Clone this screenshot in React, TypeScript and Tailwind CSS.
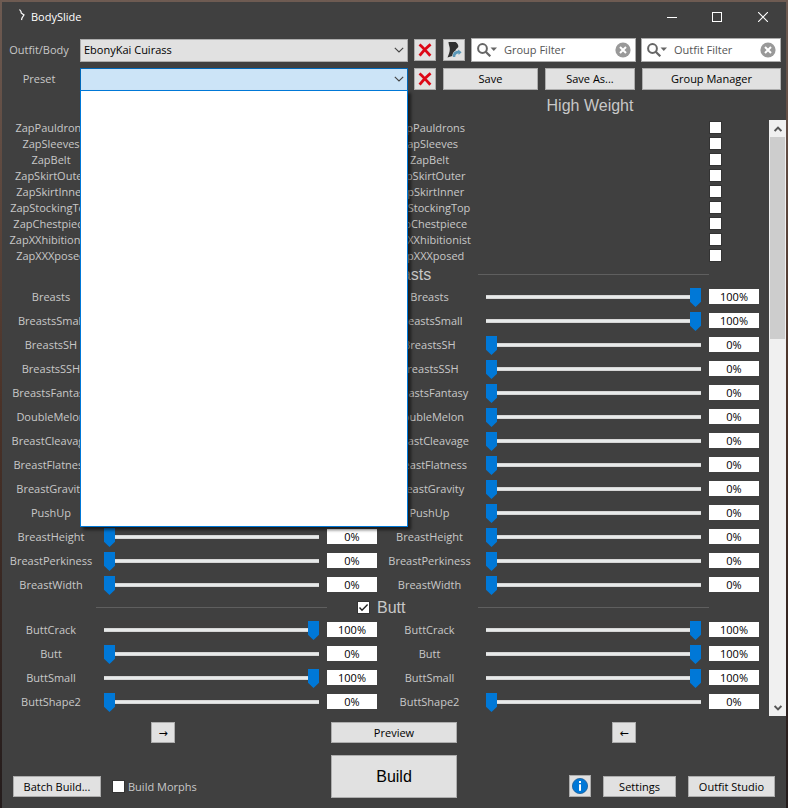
import React, { useState } from 'react';

type SliderItem = { name: string; low: number; high: number };

const zaps = [
  'ZapPauldrons',
  'ZapSleeves',
  'ZapBelt',
  'ZapSkirtOuter',
  'ZapSkirtInner',
  'ZapStockingTop',
  'ZapChestpiece',
  'ZapXXhibitionist',
  'ZapXXXposed',
];

const breasts: SliderItem[] = [
  { name: 'Breasts', low: 100, high: 100 },
  { name: 'BreastsSmall', low: 100, high: 100 },
  { name: 'BreastsSH', low: 0, high: 0 },
  { name: 'BreastsSSH', low: 0, high: 0 },
  { name: 'BreastsFantasy', low: 0, high: 0 },
  { name: 'DoubleMelon', low: 0, high: 0 },
  { name: 'BreastCleavage', low: 0, high: 0 },
  { name: 'BreastFlatness', low: 0, high: 0 },
  { name: 'BreastGravity', low: 0, high: 0 },
  { name: 'PushUp', low: 0, high: 0 },
  { name: 'BreastHeight', low: 0, high: 0 },
  { name: 'BreastPerkiness', low: 0, high: 0 },
  { name: 'BreastWidth', low: 0, high: 0 },
];

const butt: SliderItem[] = [
  { name: 'ButtCrack', low: 100, high: 100 },
  { name: 'Butt', low: 0, high: 100 },
  { name: 'ButtSmall', low: 100, high: 100 },
  { name: 'ButtShape2', low: 0, high: 0 },
];

const rowGrid = 'grid grid-cols-[90px_1fr_50px_101px_1fr_50px] items-center';
const buttonStyle = 'flex items-center justify-center border border-[#adadad] bg-[#e1e1e1] text-black';

const CheckBox: React.FC<{ id: string; checked?: boolean }> = ({ id, checked }) => (
  <span className="relative flex size-[13px] shrink-0">
    <input
      id={id}
      type="checkbox"
      defaultChecked={checked}
      className="peer size-[13px] appearance-none border border-[#333333] bg-white"
    />
    <svg
      viewBox="0 0 13 13"
      className="pointer-events-none absolute inset-0 hidden size-[13px] peer-checked:block"
      fill="none"
      stroke="#222"
      strokeWidth="1.4"
    >
      <path d="M2.5 6.5 L5 9.2 L10.6 3.4" />
    </svg>
  </span>
);

const Slider: React.FC<{ id: string; value: number; onChange: (value: number) => void }> = ({ id, value, onChange }) => (
  <div className="flex px-2">
    <input
      id={id}
      type="range"
      min={0}
      max={100}
      value={value}
      onChange={(e) => onChange(Number(e.target.value))}
      className="h-5 w-full min-w-0 appearance-none bg-transparent [&::-webkit-slider-runnable-track]:h-1 [&::-webkit-slider-runnable-track]:border-y [&::-webkit-slider-runnable-track]:border-[#d6d6d6] [&::-webkit-slider-runnable-track]:bg-[#e7eaea] [&::-webkit-slider-thumb]:mt-[-8px] [&::-webkit-slider-thumb]:h-[19px] [&::-webkit-slider-thumb]:w-[11px] [&::-webkit-slider-thumb]:appearance-none [&::-webkit-slider-thumb]:bg-[#0078d7] [&::-webkit-slider-thumb]:[clip-path:polygon(0_0,100%_0,100%_72%,50%_100%,0_72%)]"
    />
  </div>
);

const ValueBox: React.FC<{ label: string; value: number }> = ({ label, value }) => (
  <input
    type="text"
    aria-label={label}
    value={`${value}%`}
    readOnly
    className="mb-px h-[15px] w-full min-w-0 bg-white text-center text-black"
  />
);

const SliderRow: React.FC<{ item: SliderItem }> = ({ item }) => {
  const [low, setLow] = useState(item.low);
  const [high, setHigh] = useState(item.high);

  return (
    <div className={`${rowGrid} h-6`}>
      <label htmlFor={`${item.name}-low`} className="flex justify-center">
        {item.name}
      </label>
      <Slider id={`${item.name}-low`} value={low} onChange={setLow} />
      <ValueBox label={item.name} value={low} />
      <label htmlFor={`${item.name}-high`} className="flex justify-center pl-1">
        {item.name}
      </label>
      <Slider id={`${item.name}-high`} value={high} onChange={setHigh} />
      <ValueBox label={item.name} value={high} />
    </div>
  );
};

const ZapRow: React.FC<{ name: string }> = ({ name }) => (
  <div className={`${rowGrid} h-4`}>
    <label htmlFor={`${name}-low`} className="flex justify-center">
      {name}
    </label>
    <span />
    <CheckBox id={`${name}-low`} />
    <label htmlFor={`${name}-high`} className="flex justify-center pl-1">
      {name}
    </label>
    <span />
    <div className="flex h-4 items-start pt-px">
      <CheckBox id={`${name}-high`} />
    </div>
  </div>
);

const Category: React.FC<{ title: string; items: SliderItem[] }> = ({ title, items }) => (
  <section>
    <div className={`${rowGrid} h-[21px]`}>
      <span />
      <hr className="border-[#5f5f5f]" />
      <div className="col-span-2 flex items-center gap-[7px] pl-[30px]">
        <CheckBox id={`category-${title}`} checked />
        <label htmlFor={`category-${title}`} className="font-['Liberation_Sans',sans-serif] text-[16px]">
          {title}
        </label>
      </div>
      <hr className="border-[#5f5f5f]" />
      <span />
    </div>
    {items.map((item) => (
      <SliderRow key={item.name} item={item} />
    ))}
  </section>
);

const Chevron: React.FC<{ className?: string }> = ({ className }) => (
  <svg viewBox="0 0 10 6" className={className} fill="none" stroke="#444" strokeWidth="1.1">
    <path d="M0.8 0.8 L5 5 L9.2 0.8" />
  </svg>
);

const DeleteButton: React.FC<{ label: string }> = ({ label }) => (
  <button type="button" aria-label={label} className={`${buttonStyle} h-[22px] w-[22px] shrink-0`}>
    <svg viewBox="0 0 14 14" className="size-[14px]" fill="none" stroke="#dd0716" strokeWidth="2.8">
      <path d="M1.5 1.5 C5 4.5 9 9 12.3 12.7 M12.6 1.4 C8.5 4.5 5 8.5 1.6 12.6" />
    </svg>
  </button>
);

const FilterBox: React.FC<{ label: string; className: string }> = ({ label, className }) => (
  <div className={`flex h-6 items-center border border-[#adadad] bg-white pr-1 pl-[5px] ${className}`}>
    <svg viewBox="0 0 20 14" className="h-[14px] w-5 shrink-0" fill="none" stroke="#666" strokeWidth="2">
      <circle cx="5.5" cy="5.5" r="4.4" />
      <path d="M8.7 8.7 L13.3 13.3" strokeWidth="2.2" />
      <path d="M13.5 4.5 H20 L16.8 8 Z" fill="#666" stroke="none" />
    </svg>
    <input
      type="text"
      aria-label={label}
      placeholder={label}
      className="mb-px w-0 min-w-0 flex-1 px-[7px] text-[#555] placeholder:text-[#555]"
    />
    <button type="button" aria-label="Clear" className="shrink-0">
      <svg viewBox="0 0 16 16" className="size-4" fill="none">
        <circle cx="8" cy="8" r="7.6" fill="#999" />
        <path d="M5 5 L11 11 M11 5 L5 11" stroke="#fff" strokeWidth="2" />
      </svg>
    </button>
  </div>
);

const TitleBar: React.FC = () => (
  <header className="flex h-[30px] items-center text-white">
    <svg viewBox="0 0 16 16" className="ml-2 size-4" fill="none" stroke="#fff" strokeWidth="1.2">
      <path d="M9.5 0.5 L11 2.5 L11.2 4 L14 6 L12 9 L11.5 11" />
    </svg>
    <h1 className="ml-[5px] flex-1">BodySlide</h1>
    <button type="button" aria-label="Minimize" className="flex h-full w-[45px] items-center justify-center">
      <svg viewBox="0 0 10 10" className="size-[10px]" stroke="#fff">
        <path d="M0 5.5 H10" />
      </svg>
    </button>
    <button type="button" aria-label="Maximize" className="flex h-full w-[46px] items-center justify-center">
      <svg viewBox="0 0 10 10" className="size-[10px]" fill="none" stroke="#fff">
        <rect x="0.5" y="0.5" width="9" height="9" />
      </svg>
    </button>
    <button type="button" aria-label="Close" className="flex h-full w-[46px] items-center justify-center">
      <svg viewBox="0 0 10 10" className="size-[10px]" stroke="#fff" strokeWidth="1.1">
        <path d="M0 0 L10 10 M10 0 L0 10" />
      </svg>
    </button>
  </header>
);

const Toolbar: React.FC = () => (
  <div className="flex flex-col gap-[5px] pt-[6px] pr-[5px]">
    <div className="flex h-6 items-center">
      <label htmlFor="outfit" className="w-[78px] shrink-0 pr-1 text-center">
        Outfit/Body
      </label>
      <div className="relative flex flex-1">
        <select
          id="outfit"
          className="h-[23px] w-full appearance-none border border-[#adadad] bg-[#e1e1e1] pl-[3px] text-black"
        >
          <option>EbonyKai Cuirass</option>
        </select>
        <Chevron className="pointer-events-none absolute top-[8px] right-1 h-[6px] w-[10px]" />
      </div>
      <div className="flex w-[373px] shrink-0 items-center pl-[6px]">
        <DeleteButton label="Delete outfit" />
        <button type="button" aria-label="Choose outfit" className={`${buttonStyle} ml-[7px] h-[22px] w-[22px] shrink-0`}>
          <svg viewBox="0 0 16 18" className="h-[18px] w-4">
            <path
              d="M2.5 1 H9.5 C11.5 2 12.5 4 12.3 6 C11 7.5 10 8 9.5 9.5 C7.5 10.5 6.5 12.5 6.2 15 L1.5 16.5 C2.8 13.5 3.8 11 3.8 8 C3.8 5.5 2.6 4 2.5 1 Z"
              fill="#303030"
            />
            <path d="M6.8 16 C6.8 12 8.5 9.8 12.2 9.8 V8.4 L15.6 11.3 L12.6 14 V12.5 C10.3 12.5 9.4 13.8 9.2 16 Z" fill="#5b98b8" />
          </svg>
        </button>
        <FilterBox label="Group Filter" className="ml-[6px] w-[165px]" />
        <FilterBox label="Outfit Filter" className="ml-[5px] w-[140px]" />
      </div>
    </div>
    <div className="flex h-6 items-center">
      <label htmlFor="preset" className="w-[78px] shrink-0 pr-1 text-center">
        Preset
      </label>
      <div className="relative flex flex-1">
        <select id="preset" className="h-[23px] w-full appearance-none border border-[#0067b8] bg-[#cce4f7] pl-[3px] text-black">
          <option></option>
        </select>
        <Chevron className="pointer-events-none absolute top-[8px] right-1 h-[6px] w-[10px]" />
        {/* open preset list, empty */}
        <div
          role="listbox"
          aria-label="Preset"
          className="absolute inset-x-0 top-[22px] z-10 h-[437px] border border-[#0078d7] bg-white shadow-[3px_3px_3px_rgba(0,0,0,0.55)]"
        />
      </div>
      <div className="flex w-[373px] shrink-0 items-center gap-[7px] pl-[6px]">
        <DeleteButton label="Delete preset" />
        <button type="button" className={`${buttonStyle} h-[22px] w-[95px]`}>
          Save
        </button>
        <button type="button" className={`${buttonStyle} h-[22px] w-[90px]`}>
          Save As...
        </button>
        <button type="button" className={`${buttonStyle} h-[22px] flex-1`}>
          Group Manager
        </button>
      </div>
    </div>
  </div>
);

const ScrollBar: React.FC = () => (
  <div className="flex w-[17px] shrink-0 flex-col bg-[#f0f0f0] px-px">
    <button type="button" aria-label="Scroll up" className="flex h-[17px] items-center justify-center">
      <svg viewBox="0 0 8 6" className="h-[6px] w-2" fill="none" stroke="#555" strokeWidth="2">
        <path d="M0.6 5 L4 1.6 L7.4 5" />
      </svg>
    </button>
    <div className="flex-1">
      <div className="h-[36%] bg-[#cdcdcd]" />
    </div>
    <button type="button" aria-label="Scroll down" className="flex h-[17px] items-center justify-center">
      <svg viewBox="0 0 8 6" className="h-[6px] w-2" fill="none" stroke="#555" strokeWidth="2">
        <path d="M0.6 1 L4 4.4 L7.4 1" />
      </svg>
    </button>
  </div>
);

const Footer: React.FC = () => (
  <footer className="grid grid-cols-[1fr_126px_1fr] gap-y-3 px-[11px] pt-[6px] pb-[10px]">
    <div className="flex justify-center pr-[18px]">
      <button type="button" className={`${buttonStyle} h-[21px] w-6`}>
        →
      </button>
    </div>
    <button type="button" className={`${buttonStyle} h-[21px]`}>
      Preview
    </button>
    <div className="flex justify-center pl-4">
      <button type="button" className={`${buttonStyle} h-[21px] w-6`}>
        ←
      </button>
    </div>
    <div className="flex items-end gap-[11px] pb-px">
      <button type="button" className={`${buttonStyle} h-[21px] w-[88px]`}>
        Batch Build...
      </button>
      <div className="flex h-[21px] items-center gap-[3px]">
        <CheckBox id="morphs" />
        <label htmlFor="morphs">Build Morphs</label>
      </div>
    </div>
    <button type="button" className={`${buttonStyle} h-[43px] font-['Liberation_Sans',sans-serif] text-[16px]`}>
      Build
    </button>
    <div className="flex items-end justify-end gap-3 pb-px">
      <button type="button" aria-label="About" className={`${buttonStyle} size-[22px]`}>
        <svg viewBox="0 0 16 16" className="size-4">
          <circle cx="8" cy="8" r="7.6" fill="#0078d7" stroke="#1c5c94" strokeWidth="0.8" />
          <rect x="7" y="3" width="2" height="2" fill="#fff" />
          <rect x="7" y="6.3" width="2" height="6.5" fill="#fff" />
        </svg>
      </button>
      <button type="button" className={`${buttonStyle} h-[21px] w-[73px]`}>
        Settings
      </button>
      <button type="button" className={`${buttonStyle} h-[21px] w-[87px]`}>
        Outfit Studio
      </button>
    </div>
  </footer>
);

const App: React.FC = () => {
  return (
    <div className="flex min-h-screen flex-col bg-linear-to-b from-[#6e5b52] via-[#4a3228] to-[#241c1c] px-[2px] pt-[2px] font-['Open_Sans','DejaVu_Sans',sans-serif] text-[11px] leading-4 text-[#c8c8c8]">
      <div className="flex flex-1 flex-col bg-[#404040]">
        <TitleBar />
        <Toolbar />
        <div className="grid h-[29px] grid-cols-2 items-center">
          <span />
          <h2 className="pt-px text-center font-['Liberation_Sans',sans-serif] text-[16px]">High Weight</h2>
        </div>
        <div className="flex">
          <main className="min-w-0 flex-1 pr-[10px] pb-[2px] pl-1">
            {zaps.map((name) => (
              <ZapRow key={name} name={name} />
            ))}
            <Category title="Breasts" items={breasts} />
            <Category title="Butt" items={butt} />
          </main>
          <ScrollBar />
        </div>
        <Footer />
      </div>
    </div>
  );
};

export default App;
